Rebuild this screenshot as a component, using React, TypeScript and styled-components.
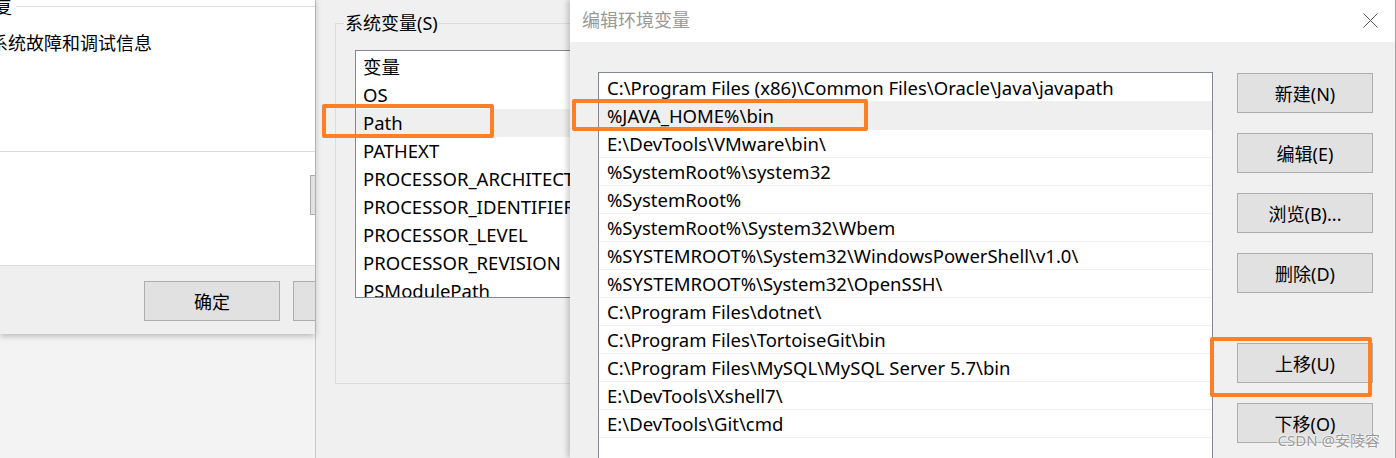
import React from 'react';
import styled, { createGlobalStyle } from 'styled-components';

const GlobalStyle = createGlobalStyle`
  html, body {
    margin: 0;
    padding: 0;
    background: #f3f3f3;
  }
  body {
    font-family: "Noto Sans", "Noto Sans CJK SC", sans-serif;
    -webkit-font-smoothing: antialiased;
  }
`;

const Desktop = styled.div`
  position: relative;
  display: flex;
  align-items: flex-start;
  width: 1396px;
  height: 458px;
  overflow: hidden;
  background: #f3f3f3;
  font-size: 18px;
  color: #000;
`;

/* ---- left dialog (behind) ---- */

const LeftWindow = styled.div`
  width: 315px;
  height: 334px;
  flex-shrink: 0;
  display: flex;
  flex-direction: column;
  overflow: hidden;
  box-shadow: 0 2px 6px rgba(0, 0, 0, 0.25);
  z-index: 1;
`;

const LeftBody = styled.div`
  height: 266px;
  background: #fff;
  display: flex;
  flex-direction: column;
  border-bottom: 1px solid #dcdcdc;
  box-sizing: border-box;
`;

const GroupHead = styled.div`
  display: flex;
  align-items: center;
  margin-top: -6px;
  height: 24px;
  margin-left: -6px;
  gap: 4px;
  &::after {
    content: '';
    flex: 1;
    height: 1px;
    background: #dcdcdc;
  }
`;

const BodyText = styled.div`
  margin-left: -10px;
  margin-top: 13px;
  line-height: 24px;
  white-space: nowrap;
`;

const Divider = styled.div`
  margin-top: 96px;
  height: 1px;
  background: #dadada;
`;

const CutRow = styled.div`
  display: flex;
  justify-content: flex-end;
  margin-top: 23px;
`;

const LeftFooter = styled.div`
  flex: 1;
  background: #efefef;
  display: flex;
  align-items: flex-start;
  padding-top: 15px;
  padding-left: 144px;
  gap: 13px;
`;

const Button = styled.button<{ $w?: number; $cut?: number }>`
  width: ${p => p.$w ?? 136}px;
  height: 40px;
  flex-shrink: 0;
  box-sizing: border-box;
  background: #e1e1e1;
  border: 1px solid #adadad;
  border-radius: 0;
  padding: 0;
  font: inherit;
  font-size: 18px;
  color: #000;
  margin-right: ${p => -(p.$cut ?? 0)}px;
  font-family: "Noto Sans", "Noto Sans CJK SC", sans-serif;
`;

/* ---- middle window ---- */

const MiddleWindow = styled.div`
  width: 255px;
  height: 458px;
  flex-shrink: 0;
  background: #f0f0f0;
  overflow: hidden;
  border-left: 1px solid #c8c8c8;
  box-sizing: border-box;
`;

const GroupBox = styled.fieldset`
  margin: 11px 0 0 19px;
  padding: 0 0 0 19px;
  width: 300px;
  height: 373px;
  box-sizing: border-box;
  border: 1px solid #dcdcdc;
`;

const Legend = styled.legend`
  margin-left: -11px;
  padding: 0 1px;
  line-height: 24px;
  font-size: 18px;
`;

const VarList = styled.div`
  margin-top: 15px;
  width: 260px;
  height: 248px;
  box-sizing: border-box;
  background: #fff;
  border: 1px solid #828790;
  padding-top: 2px;
  overflow: hidden;
`;

const VarRow = styled.div<{ $sel?: boolean }>`
  height: 28px;
  line-height: 28px;
  padding-left: 7px;
  font-size: 18.5px;
  white-space: nowrap;
  background: ${p => (p.$sel ? '#efefef' : 'transparent')};
`;

/* ---- edit dialog (front) ---- */

const EditWindow = styled.div`
  flex: 1;
  height: 458px;
  display: flex;
  flex-direction: column;
  background: #f0f0f0;
  border-right: 1px solid #a0a0a0;
  box-sizing: border-box;
  box-shadow: -3px 0 5px rgba(0, 0, 0, 0.18);
  z-index: 2;
`;

const TitleBar = styled.div`
  height: 42px;
  flex-shrink: 0;
  background: #fff;
  display: flex;
  align-items: center;
  justify-content: space-between;
  padding: 0 17px 0 12px;
`;

const Title = styled.span`
  color: #999;
  font-size: 18px;
  margin-top: -4px;
`;

const Close = styled.svg`
  width: 15px;
  height: 15px;
  margin-top: -2px;
`;

const EditBody = styled.div`
  flex: 1;
  display: flex;
  align-items: flex-start;
  padding: 30px 0 0 28px;
`;

const PathList = styled.div`
  width: 615px;
  height: 420px;
  flex-shrink: 0;
  box-sizing: border-box;
  background: #fff;
  border: 1px solid #828790;
  padding-top: 1px;
`;

const PathRow = styled.div<{ $sel?: boolean }>`
  height: 28px;
  line-height: 27px;
  box-sizing: border-box;
  padding-left: 8px;
  font-size: 18.5px;
  white-space: nowrap;
  border-bottom: 1px solid #f0f0f0;
  background: ${p => (p.$sel ? '#efefef' : 'transparent')};
`;

const ButtonColumn = styled.div`
  margin-left: 24px;
  padding-top: 1px;
  display: flex;
  flex-direction: column;
  gap: 20px;
`;

const Spacer = styled.div`
  height: 10px;
`;

/* ---- overlays ---- */

const Mark = styled.div<{ $x: number; $y: number; $w: number; $h: number }>`
  position: absolute;
  left: ${p => p.$x}px;
  top: ${p => p.$y}px;
  width: ${p => p.$w}px;
  height: ${p => p.$h}px;
  box-sizing: border-box;
  border: 4px solid #ff7f27;
  border-radius: 2px;
  z-index: 5;
`;

const Watermark = styled.div`
  position: absolute;
  right: 16px;
  bottom: 8px;
  font-size: 15px;
  color: rgba(120, 120, 120, 0.75);
  text-shadow: 0 0 2px #fff, 0 0 2px #fff;
  z-index: 6;
  font-family: "Noto Sans", "Noto Sans CJK SC", sans-serif;
`;

const vars = [
  '变量',
  'OS',
  'Path',
  'PATHEXT',
  'PROCESSOR_ARCHITECTURE',
  'PROCESSOR_IDENTIFIER',
  'PROCESSOR_LEVEL',
  'PROCESSOR_REVISION',
  'PSModulePath',
];

const paths = [
  'C:\\Program Files (x86)\\Common Files\\Oracle\\Java\\javapath',
  '%JAVA_HOME%\\bin',
  'E:\\DevTools\\VMware\\bin\\',
  '%SystemRoot%\\system32',
  '%SystemRoot%',
  '%SystemRoot%\\System32\\Wbem',
  '%SYSTEMROOT%\\System32\\WindowsPowerShell\\v1.0\\',
  '%SYSTEMROOT%\\System32\\OpenSSH\\',
  'C:\\Program Files\\dotnet\\',
  'C:\\Program Files\\TortoiseGit\\bin',
  'C:\\Program Files\\MySQL\\MySQL Server 5.7\\bin',
  'E:\\DevTools\\Xshell7\\',
  'E:\\DevTools\\Git\\cmd',
];

const App = () => (
  <>
    <GlobalStyle />
    <Desktop>
      <LeftWindow>
        <LeftBody>
          <GroupHead>复</GroupHead>
          <BodyText>系统故障和调试信息</BodyText>
          <Divider />
          <CutRow>
            <Button $w={80} $cut={75} />
          </CutRow>
        </LeftBody>
        <LeftFooter>
          <Button>确定</Button>
          <Button $cut={100} />
        </LeftFooter>
      </LeftWindow>

      <MiddleWindow>
        <GroupBox>
          <Legend>系统变量(S)</Legend>
          <VarList>
            {vars.map(v => (
              <VarRow key={v} $sel={v === 'Path'}>
                {v}
              </VarRow>
            ))}
          </VarList>
        </GroupBox>
      </MiddleWindow>

      <EditWindow>
        <TitleBar>
          <Title>编辑环境变量</Title>
          <Close viewBox="0 0 15 15">
            <path d="M0.5 0.5 L14.5 14.5 M14.5 0.5 L0.5 14.5" stroke="#555" strokeWidth="1" fill="none" />
          </Close>
        </TitleBar>
        <EditBody>
          <PathList>
            {paths.map((p, i) => (
              <PathRow key={p} $sel={i === 1}>
                {p}
              </PathRow>
            ))}
          </PathList>
          <ButtonColumn>
            <Button>新建(N)</Button>
            <Button>编辑(E)</Button>
            <Button>浏览(B)...</Button>
            <Button>删除(D)</Button>
            <Spacer />
            <Button>上移(U)</Button>
            <Button>下移(O)</Button>
          </ButtonColumn>
        </EditBody>
      </EditWindow>

      <Mark $x={322} $y={104} $w={172} $h={34} />
      <Mark $x={572} $y={99} $w={296} $h={32} />
      <Mark $x={1210} $y={337} $w={162} $h={60} />
      <Watermark>CSDN @安陵容</Watermark>
    </Desktop>
  </>
);

export default App;
